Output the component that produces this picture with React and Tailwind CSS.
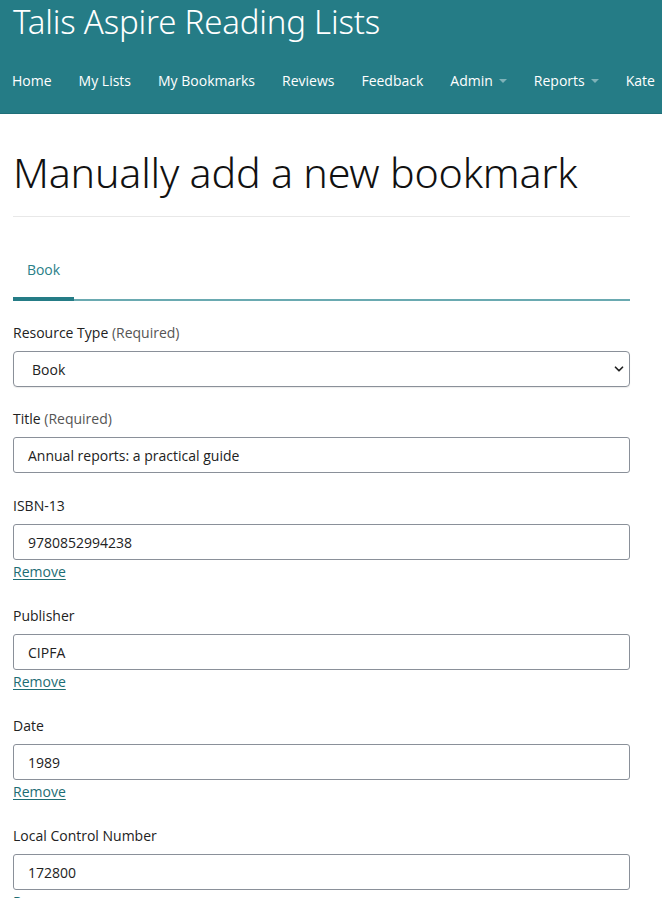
import { ChevronDown } from 'lucide-react';

const navItems = [
  { label: 'Home' },
  { label: 'My Lists' },
  { label: 'My Bookmarks' },
  { label: 'Reviews' },
  { label: 'Feedback' },
  { label: 'Admin', caret: true },
  { label: 'Reports', caret: true },
  { label: 'Kate' },
];

function Field({ label, required, value, removable }) {
  return (
    <div className="flex flex-col">
      <label className="h-5 leading-5 text-[14px] text-[#222]">
        {label}
        {required && <span className="text-[#555]"> (Required)</span>}
      </label>
      <div className="mt-2 h-9 border border-[#8a9099] rounded-[3px] px-[14px] flex items-center text-[14px] text-[#222]">
        {value}
      </div>
      {removable && (
        <a href="#" className="mt-[2px] h-5 leading-5 text-[14px] text-[#1d6d74] underline underline-offset-2 w-fit">
          Remove
        </a>
      )}
    </div>
  );
}

export default function App() {
  return (
    <div className="w-[662px] h-[898px] overflow-hidden bg-white font-['Open_Sans','Noto_Sans',sans-serif]">
      {/* Header */}
      <header className="h-[114px] bg-[#257c86] border-b border-[#1f6f78] flex flex-col">
        <div className="pl-[13px] pt-[2px] text-[33px] font-['Noto_Sans','Open_Sans',sans-serif] font-light text-white leading-[40px] tracking-[-0.2px]">
          Talis Aspire Reading Lists
        </div>
        <nav className="mt-[28px] flex items-center whitespace-nowrap text-[14px] text-white">
          {navItems.map((item) => (
            <span key={item.label} className="flex items-center px-[13.5px] first:pl-3">
              {item.label}
              {item.caret && (
                <span className="ml-[6px] w-0 h-0 border-l-[4px] border-r-[4px] border-t-[4px] border-l-transparent border-r-transparent border-t-[#7fb2b8]" />
              )}
            </span>
          ))}
        </nav>
      </header>

      <main className="px-[13px] w-[643px]">
        <h1 className="mt-[30px] text-[41.2px] font-['Noto_Sans','Open_Sans',sans-serif] font-light leading-[56px] text-[#111] tracking-[-0.2px]">
          Manually add a new bookmark
        </h1>
        <hr className="mt-[16px] border-t border-[#e8e8e8]" />

        {/* Tabs */}
        <div className="mt-[43px] border-b-2 border-[#6aaab1] flex">
          <div className="relative w-[61px] text-center text-[14px] text-[#2a8088] leading-5 pb-[19px]">
            Book
            <span className="absolute left-0 right-0 -bottom-[2px] h-[4px] bg-[#257c86]" />
          </div>
        </div>

        <form className="mt-[22px] flex flex-col">
          <div className="flex flex-col">
            <label className="h-5 leading-5 text-[14px] text-[#222]">
              Resource Type<span className="text-[#555]"> (Required)</span>
            </label>
            <div className="mt-2 h-9 border border-[#8a9099] rounded-[4px] pl-[18px] pr-[3px] flex items-center justify-between text-[14px] text-[#222] shadow-[0_1px_1px_rgba(0,0,0,0.08)]">
              <span>Book</span>
              <ChevronDown size={14} strokeWidth={3} className="text-[#222]" />
            </div>
          </div>

          <div className="mt-[22px]">
            <Field label="Title" required value="Annual reports: a practical guide" />
          </div>
          <div className="mt-[23px]">
            <Field label="ISBN-13" value="9780852994238" removable />
          </div>
          <div className="mt-[24px]">
            <Field label="Publisher" value="CIPFA" removable />
          </div>
          <div className="mt-[24px]">
            <Field label="Date" value="1989" removable />
          </div>
          <div className="mt-[24px]">
            <Field label="Local Control Number" value="172800" removable />
          </div>
        </form>
      </main>
    </div>
  );
}
